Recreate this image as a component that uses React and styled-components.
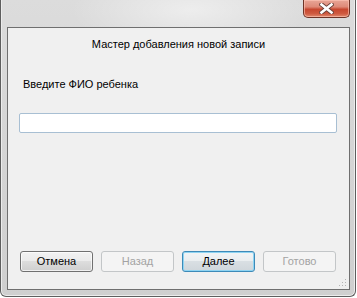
import React from "react";
import styled, { createGlobalStyle } from "styled-components";

const GlobalStyle = createGlobalStyle`
  html, body {
    margin: 0;
    padding: 0;
    background: #ffffff;
  }
  body {
    font-family: "Liberation Sans", Arial, sans-serif;
  }
`;

function App() {
  return (
    <>
      <GlobalStyle />
      <Window>
        <TitleBar>
          <CloseButton aria-label="Закрыть">
            <svg width="15" height="11" viewBox="0 0 15 11">
              <path
                d="M2.5 1.5 L12.5 9.5 M12.5 1.5 L2.5 9.5"
                stroke="#6a4038"
                strokeWidth="4.4"
                strokeLinecap="square"
              />
              <path
                d="M2.5 1.5 L12.5 9.5 M12.5 1.5 L2.5 9.5"
                stroke="#ffffff"
                strokeWidth="2.6"
                strokeLinecap="square"
              />
            </svg>
          </CloseButton>
        </TitleBar>
        <Client>
          <Heading>Мастер добавления новой записи</Heading>
          <Label>Введите ФИО ребенка</Label>
          <TextInput type="text" />
          <Spacer />
          <ButtonRow>
            <Button>Отмена</Button>
            <Button disabled>Назад</Button>
            <Button primary>Далее</Button>
            <Button disabled>Готово</Button>
          </ButtonRow>
          <Grip>
            <svg width="8" height="8" viewBox="0 0 8 8">
              <rect x="6" y="0" width="1" height="1" fill="#b5b5b5" />
              <rect x="3" y="3" width="1" height="1" fill="#b5b5b5" />
              <rect x="6" y="3" width="1" height="1" fill="#b5b5b5" />
              <rect x="0" y="6" width="1" height="1" fill="#b5b5b5" />
              <rect x="3" y="6" width="1" height="1" fill="#b5b5b5" />
              <rect x="6" y="6" width="1" height="1" fill="#b5b5b5" />
            </svg>
          </Grip>
        </Client>
      </Window>
    </>
  );
}

const Window = styled.div`
  box-sizing: border-box;
  width: 356px;
  height: 297px;
  display: flex;
  flex-direction: column;
  padding: 0 5px 6px 6px;
  border: 1px solid #5e5e5e;
  border-top: none;
  border-radius: 0 0 6px 6px;
  background:
    radial-gradient(ellipse 120px 40px at 190px 10px, rgba(255, 255, 255, 0.5), rgba(255, 255, 255, 0)),
    linear-gradient(180deg, #dcdcdc 0%, #d6d6d6 40%, #cfcfcf 100%);
  box-shadow: inset 1px 0 0 #ececec, inset -1px 0 0 #ececec, inset 0 -1px 0 #ececec;
`;

const TitleBar = styled.div`
  height: 27px;
  flex: none;
  display: flex;
  justify-content: flex-end;
  align-items: flex-start;
`;

const CloseButton = styled.button`
  box-sizing: border-box;
  width: 47px;
  height: 18px;
  margin: 0;
  padding: 0 0 1px;
  display: flex;
  align-items: center;
  justify-content: center;
  border: 1px solid #6e3427;
  border-top: none;
  border-radius: 0 0 5px 5px;
  background: linear-gradient(
    180deg,
    #e8a697 0%,
    #de8a78 40%,
    #c7472f 55%,
    #cf5a40 80%,
    #e08a6e 100%
  );
  box-shadow: inset 0 0 0 1px rgba(255, 200, 185, 0.6);
`;

const Client = styled.div`
  position: relative;
  flex: 1;
  display: flex;
  flex-direction: column;
  border: 1px solid #6f6f6f;
  background: #f0f0f0;
  color: #000000;
  font-size: 11px;
`;

const Heading = styled.div`
  margin-top: 10px;
  line-height: 13px;
  text-align: center;
`;

const Label = styled.div`
  margin-top: 27px;
  padding-left: 15px;
  line-height: 13px;
`;

const TextInput = styled.input`
  box-sizing: border-box;
  width: 318px;
  height: 20px;
  margin: 22px 0 0 11px;
  border: 1px solid #a8bfd3;
  border-radius: 2px;
  background: #ffffff;
  outline: none;
`;

const Spacer = styled.div`
  flex: 1;
`;

const ButtonRow = styled.div`
  display: flex;
  gap: 8px;
  padding-left: 12px;
  margin-bottom: 17px;
`;

const Button = styled.button`
  box-sizing: border-box;
  width: 73px;
  height: 21px;
  padding: 0;
  font-family: "Liberation Sans", Arial, sans-serif;
  font-size: 11px;
  line-height: 19px;
  border-radius: 3px;
  color: ${(p) => (p.disabled ? "#a3a3a3" : "#000000")};
  border: 1px solid
    ${(p) => (p.disabled ? "#c3c6c8" : p.primary ? "#3d8ab8" : "#707070")};
  background: ${(p) =>
    p.disabled
      ? "#f4f4f4"
      : p.primary
      ? "linear-gradient(180deg, #f2f4f5 0%, #eaeef0 45%, #d9dfe3 50%, #cfd6db 100%)"
      : "linear-gradient(180deg, #f2f2f2 0%, #ebebeb 45%, #dddddd 50%, #cfcfcf 100%)"};
  box-shadow: ${(p) =>
    p.disabled
      ? "none"
      : p.primary
      ? "inset 0 0 0 1px #8fd4f2"
      : "inset 0 0 0 1px rgba(255, 255, 255, 0.7)"};
`;

const Grip = styled.div`
  position: absolute;
  right: 2px;
  bottom: 2px;
  width: 8px;
  height: 8px;
  line-height: 0;
`;

export default App;
